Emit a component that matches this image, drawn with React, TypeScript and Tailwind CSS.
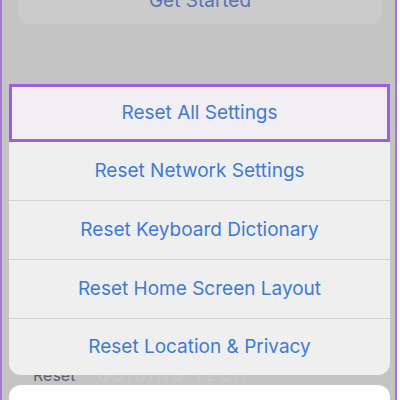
import React from "react";

const rows = [
  "Reset Network Settings",
  "Reset Keyboard Dictionary",
  "Reset Home Screen Layout",
];

export default function App() {
  return (
    <div className="w-[400px] h-[400px] bg-white overflow-hidden" style={{ fontFamily: "Inter, 'Noto Sans', sans-serif" }}>
      <div className="w-[397px] h-[400px] bg-[#c4c4c4] border-l-2 border-r-2 border-[#a872d8] overflow-hidden flex flex-col">
        <div className="ml-[16px] w-[364px] h-[64px] mt-[-40px] shrink-0 rounded-[12px] bg-[#cbcbcb] pt-[29px] text-center text-[19px] leading-[24px] text-[#5574b4]">
          Get Started
        </div>
        <div className="relative z-10 ml-[7px] mt-[60px] w-[381px] shrink-0 rounded-b-[12px] overflow-hidden">
          <div className="h-[58px] border-[3px] border-[#9f5ce2] bg-[#f2eff4] flex items-center justify-center text-[19px] text-[#3f7bd2]">
            Reset All Settings
          </div>
          <div className="h-[58px] bg-[#efeff0] flex items-center justify-center text-[19px] text-[#3f7bd2]">
            {rows[0]}
          </div>
          <div className="h-[59px] bg-[#efeff0] border-t border-[#d3d3d5] flex items-center justify-center text-[19px] text-[#3f7bd2]">
            {rows[1]}
          </div>
          <div className="h-[59px] bg-[#efeff0] border-t border-[#d3d3d5] flex items-center justify-center text-[19px] text-[#3f7bd2]">
            {rows[2]}
          </div>
          <div className="h-[57px] bg-[#efeff0] border-t border-[#d3d3d5] flex items-center justify-center text-[19px] text-[#3f7bd2]">
            Reset Location &amp; Privacy
          </div>
        </div>
        <div className="h-[10px] shrink-0 overflow-hidden relative">
          <div className="mt-[-9px] ml-[31px] flex items-center gap-[22px] text-[16px] leading-[18px]">
            <span className="text-[#5a6070]">Reset</span>
            <span className="text-[#cbcbcb] tracking-[3px]">GUIDING TECH</span>
          </div>
        </div>
        <div className="ml-[7px] w-[381px] flex-1 rounded-t-[12px] bg-white" />
      </div>
    </div>
  );
}
